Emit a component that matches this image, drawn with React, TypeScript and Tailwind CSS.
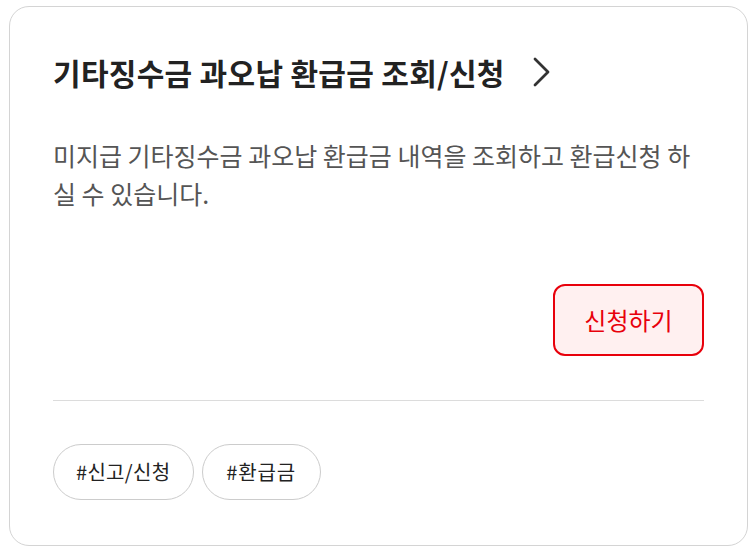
export default function App() {
  return (
    <div className="w-[754px] h-[554px] bg-white pt-[6px] pl-[9px]" style={{ fontFamily: '"Noto Sans CJK KR", "Noto Sans", sans-serif' }}>
      <div className="w-[739px] h-[540px] border border-[#d4d4d4] rounded-[20px] px-[43px] pt-[44px] pb-[44px] flex flex-col">
        <div className="flex items-center h-[42px]">
          <h2 className="text-[30px] leading-[42px] font-bold text-[#222] tracking-[0.3px]">기타징수금 과오납 환급금 조회/신청</h2>
          <svg className="ml-[26px]" width="22" height="32" viewBox="0 0 22 32" fill="none">
            <path d="M4 3 L17 16 L4 29" stroke="#333" strokeWidth="2.8" strokeLinecap="round" strokeLinejoin="round" />
          </svg>
        </div>
        <p className="mt-[43px] text-[25px] leading-[38px] text-[#555]">
          미지급 기타징수금 과오납 환급금 내역을 조회하고 환급신청 하실 수 있습니다.
        </p>
        <div className="flex justify-end mt-[72px]">
          <button className="w-[151px] h-[72px] border-2 border-[#e8000b] rounded-[12px] bg-[#fff0f0] text-[#e8000b] text-[24px]">
            신청하기
          </button>
        </div>
        <div className="mt-[44px] border-t border-[#dcdcdc]" />
        <div className="mt-[43px] flex gap-[8px]">
          <span className="h-[56px] pl-[22px] pr-[23px] flex items-center rounded-full border border-[#cccccc] text-[20px] tracking-[0.3px] text-[#222]">#신고/신청</span>
          <span className="h-[56px] pl-[23px] pr-[24px] flex items-center rounded-full border border-[#cccccc] text-[20px] tracking-[0.8px] text-[#222]">#환급금</span>
        </div>
      </div>
    </div>
  );
}
